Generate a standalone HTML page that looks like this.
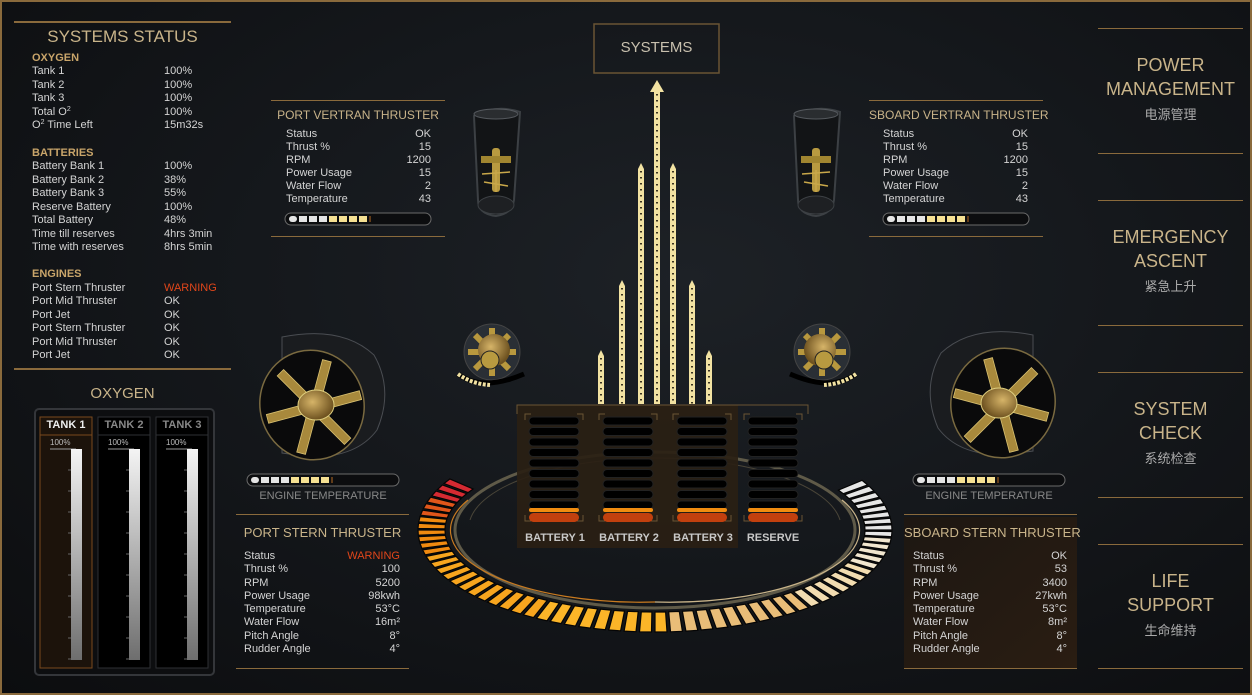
<!DOCTYPE html>
<html><head><meta charset="utf-8"><style>
*{margin:0;padding:0;box-sizing:border-box}
html,body{width:1252px;height:695px;overflow:hidden;background:#0b0c0e}
body{font-family:"Liberation Sans","Noto Sans CJK SC",sans-serif;position:relative}
#bg{position:absolute;left:0;top:0;width:1252px;height:695px;background:radial-gradient(ellipse at 55% 40%,#1d2126 0%,#15181c 45%,#0c0d0f 100%);border:2px solid #8a6a3c}
.t{position:absolute;white-space:nowrap}
.g{color:#c9b48a}
.line{position:absolute;height:2px;background:#8a6a3c}
.r{position:absolute;left:32px;width:200px;font-size:11px;line-height:13px;color:#d4d4d4;white-space:nowrap}
.r span{position:absolute;left:132px}
.r sup{font-size:7px;line-height:0;vertical-align:4px}
.hd{color:#c9a56a;font-weight:bold}
.row{position:absolute;font-size:11px;color:#d4d4d4;line-height:13px}
.menu{position:absolute;left:1098px;width:145px;text-align:center;color:#c9b48a;font-size:18px;line-height:24px}
.cjk{font-size:13px;color:#aaa;line-height:20px;margin-top:4px}
</style></head><body>
<div id="bg"></div>
<svg id="s" width="1252" height="695" style="position:absolute;left:0;top:0">
<defs>
<linearGradient id="tb" x1="0" y1="0" x2="0" y2="1"><stop offset="0" stop-color="#f4f4f4"/><stop offset="1" stop-color="#6e6e6e"/></linearGradient>
<radialGradient id="hub" cx=".4" cy=".4" r=".6"><stop offset="0" stop-color="#d6b468"/><stop offset="1" stop-color="#6e5220"/></radialGradient>
<linearGradient id="sst" x1="0" y1="0" x2="1" y2="1"><stop offset="0" stop-color="#1d1712"/><stop offset="1" stop-color="#2a1d12"/></linearGradient>
</defs>
<rect x="904" y="517" width="173" height="151" fill="url(#sst)"/>
<rect x="35" y="409" width="179" height="266" rx="4" fill="#0d0e10" stroke="#34363a" stroke-width="2"/>
<rect x="40" y="417" width="52" height="251" fill="#1c130b" stroke="#7a4a1e"/>
<line x1="40" y1="435" x2="92" y2="435" stroke="#7a4a1e"/>
<rect x="98" y="417" width="52" height="251" fill="#000" stroke="#2e3034"/>
<line x1="98" y1="435" x2="150" y2="435" stroke="#2e3034"/>
<rect x="156" y="417" width="52" height="251" fill="#000" stroke="#2e3034"/>
<line x1="156" y1="435" x2="208" y2="435" stroke="#2e3034"/>
<g id="tanks"></g>
<rect x="594" y="24" width="125" height="49" fill="none" stroke="#6a5434" stroke-width="1.5"/>
<g id="spires"></g>
<g id="ring"></g>
<ellipse cx="655" cy="530" rx="200" ry="78" fill="none" stroke="#5f5a48" stroke-width="3"/>
<path d="M 468 500 A 190 72 0 0 0 655 602" fill="none" stroke="#c87a20" stroke-width="1.2"/>
<path d="M 655 602 A 190 72 0 0 0 842 500" fill="none" stroke="#c9b48a" stroke-width="1.2"/>
<path d="M 470 520 A 186 70 0 0 1 655 458 A 186 70 0 0 1 840 520" fill="none" stroke="#4a4538" stroke-width="1"/>
<rect x="517" y="405" width="221" height="143" fill="#2a1f14" opacity=".92"/>
<path d="M517 414 V405 H808 V414" fill="none" stroke="#6a5434"/>
<g id="bat"></g>
<g id="prog"></g>
<g id="tubes"></g>
<g id="fans"></g>
</svg>

<div class="line" style="left:14px;top:21px;width:217px"></div>
<div class="line" style="left:14px;top:368px;width:217px"></div>
<div class="t g" style="left:14px;width:217px;text-align:center;top:27px;font-size:17px">SYSTEMS STATUS</div>

<div class="r hd" style="top:52px">OXYGEN</div>
<div class="r" style="top:65px">Tank 1<span>100%</span></div>
<div class="r" style="top:79px">Tank 2<span>100%</span></div>
<div class="r" style="top:92px">Tank 3<span>100%</span></div>
<div class="r" style="top:106px">Total O<sup>2</sup><span>100%</span></div>
<div class="r" style="top:119px">O<sup>2</sup> Time Left<span>15m32s</span></div>
<div class="r hd" style="top:147px">BATTERIES</div>
<div class="r" style="top:160px">Battery Bank 1<span>100%</span></div>
<div class="r" style="top:174px">Battery Bank 2<span>38%</span></div>
<div class="r" style="top:187px">Battery Bank 3<span>55%</span></div>
<div class="r" style="top:201px">Reserve Battery<span>100%</span></div>
<div class="r" style="top:214px">Total Battery<span>48%</span></div>
<div class="r" style="top:228px">Time till reserves<span>4hrs 3min</span></div>
<div class="r" style="top:241px">Time with reserves<span>8hrs 5min</span></div>
<div class="r hd" style="top:268px">ENGINES</div>
<div class="r" style="top:282px">Port Stern Thruster<span style="color:#e0461a">WARNING</span></div>
<div class="r" style="top:295px">Port Mid Thruster<span>OK</span></div>
<div class="r" style="top:309px">Port Jet<span>OK</span></div>
<div class="r" style="top:322px">Port Stern Thruster<span>OK</span></div>
<div class="r" style="top:336px">Port Mid Thruster<span>OK</span></div>
<div class="r" style="top:349px">Port Jet<span>OK</span></div>

<div class="t g" style="left:14px;width:217px;text-align:center;top:385px;font-size:15px">OXYGEN</div>
<div class="t" style="left:40px;width:52px;text-align:center;top:419px;font-size:11px;color:#eee;font-weight:bold">TANK 1</div>
<div class="t" style="left:98px;width:52px;text-align:center;top:419px;font-size:11px;color:#888;font-weight:bold">TANK 2</div>
<div class="t" style="left:156px;width:52px;text-align:center;top:419px;font-size:11px;color:#888;font-weight:bold">TANK 3</div>
<div class="t" style="left:50px;top:438px;font-size:8px;color:#bbb">100%</div>
<div class="t" style="left:108px;top:438px;font-size:8px;color:#bbb">100%</div>
<div class="t" style="left:166px;top:438px;font-size:8px;color:#bbb">100%</div>

<div class="t" style="left:594px;width:125px;text-align:center;top:39px;font-size:15px;color:#c8c0ae">SYSTEMS</div>

<div class="line" style="left:271px;top:100px;width:174px;height:1px"></div>
<div class="line" style="left:271px;top:236px;width:174px;height:1px"></div>
<div class="t g" style="left:271px;width:174px;text-align:center;top:108px;font-size:12px">PORT VERTRAN THRUSTER</div>
<div class="row" style="left:286px;top:128px;width:145px">Status<br>Thrust %<br>RPM<br>Power Usage<br>Water Flow<br>Temperature</div>
<div class="row" style="left:286px;top:128px;width:145px;text-align:right">OK<br>15<br>1200<br>15<br>2<br>43</div>
<div class="line" style="left:869px;top:100px;width:174px;height:1px"></div>
<div class="line" style="left:869px;top:236px;width:174px;height:1px"></div>
<div class="t g" style="left:869px;width:174px;text-align:center;top:108px;font-size:12px">SBOARD VERTRAN THRUSTER</div>
<div class="row" style="left:883px;top:128px;width:145px">Status<br>Thrust %<br>RPM<br>Power Usage<br>Water Flow<br>Temperature</div>
<div class="row" style="left:883px;top:128px;width:145px;text-align:right">OK<br>15<br>1200<br>15<br>2<br>43</div>

<div class="t" style="left:247px;width:152px;text-align:center;top:490px;font-size:11px;color:#888">ENGINE TEMPERATURE</div>
<div class="t" style="left:913px;width:152px;text-align:center;top:490px;font-size:11px;color:#888">ENGINE TEMPERATURE</div>

<div class="line" style="left:236px;top:514px;width:173px;height:1px"></div>
<div class="line" style="left:236px;top:668px;width:173px;height:1px"></div>
<div class="t g" style="left:236px;width:173px;text-align:center;top:525px;font-size:13px">PORT STERN THRUSTER</div>
<div class="row" style="left:244px;top:550px;width:156px;line-height:13.3px">Status<br>Thrust %<br>RPM<br>Power Usage<br>Temperature<br>Water Flow<br>Pitch Angle<br>Rudder Angle</div>
<div class="row" style="left:244px;top:550px;width:156px;text-align:right;line-height:13.3px"><span style="color:#e0461a">WARNING</span><br>100<br>5200<br>98kwh<br>53°C<br>16m²<br>8°<br>4°</div>
<div class="line" style="left:904px;top:514px;width:173px;height:1px"></div>
<div class="line" style="left:904px;top:668px;width:173px;height:1px"></div>
<div class="t g" style="left:904px;width:173px;text-align:center;top:525px;font-size:13px">SBOARD STERN THRUSTER</div>
<div class="row" style="left:913px;top:550px;width:154px;line-height:13.3px">Status<br>Thrust %<br>RPM<br>Power Usage<br>Temperature<br>Water Flow<br>Pitch Angle<br>Rudder Angle</div>
<div class="row" style="left:913px;top:550px;width:154px;text-align:right;line-height:13.3px">OK<br>53<br>3400<br>27kwh<br>53°C<br>8m²<br>8°<br>4°</div>

<div class="t" style="left:517px;top:532px;font-size:11px;color:#c8c8c8;font-weight:bold;width:76px;text-align:center">BATTERY 1</div>
<div class="t" style="left:591px;top:532px;font-size:11px;color:#c8c8c8;font-weight:bold;width:76px;text-align:center">BATTERY 2</div>
<div class="t" style="left:665px;top:532px;font-size:11px;color:#c8c8c8;font-weight:bold;width:76px;text-align:center">BATTERY 3</div>
<div class="t" style="left:735px;top:532px;font-size:11px;color:#c8c8c8;font-weight:bold;width:76px;text-align:center">RESERVE</div>

<div class="line" style="left:1098px;top:28px;width:145px;height:1px"></div>
<div class="line" style="left:1098px;top:153px;width:145px;height:1px"></div>
<div class="line" style="left:1098px;top:200px;width:145px;height:1px"></div>
<div class="line" style="left:1098px;top:325px;width:145px;height:1px"></div>
<div class="line" style="left:1098px;top:372px;width:145px;height:1px"></div>
<div class="line" style="left:1098px;top:497px;width:145px;height:1px"></div>
<div class="line" style="left:1098px;top:544px;width:145px;height:1px"></div>
<div class="line" style="left:1098px;top:668px;width:145px;height:1px"></div>
<div class="menu" style="top:53px">POWER<br>MANAGEMENT<div class="cjk">电源管理</div></div>
<div class="menu" style="top:225px">EMERGENCY<br>ASCENT<div class="cjk">紧急上升</div></div>
<div class="menu" style="top:397px">SYSTEM<br>CHECK<div class="cjk">系统检查</div></div>
<div class="menu" style="top:569px">LIFE<br>SUPPORT<div class="cjk">生命维持</div></div>

<script>
var NS="http://www.w3.org/2000/svg";
function el(p,t,a){var e=document.createElementNS(NS,t);for(var k in a)e.setAttribute(k,a[k]);document.getElementById(p).appendChild(e);return e;}
[40,98,156].forEach(function(x){
 el("tanks","line",{x1:x+10,y1:449,x2:x+36,y2:449,stroke:"#999","stroke-width":1});
 el("tanks","rect",{x:x+31,y:449,width:11,height:211,fill:"url(#tb)"});
 for(var i=0;i<10;i++){el("tanks","line",{x1:x+28,y1:470+i*21,x2:x+31,y2:470+i*21,stroke:"#666"});}
});
var sp=[[601,350],[622,280],[641,163],[657,86],[673,163],[692,280],[709,350]];
sp.forEach(function(s){
 var x=s[0],t=s[1];
 el("spires","path",{d:"M"+(x-3)+" "+(t+6)+" L"+x+" "+t+" L"+(x+3)+" "+(t+6)+" V404 H"+(x-3)+" Z",fill:"#f2e2a2"});
 el("spires","line",{x1:x,y1:t+8,x2:x,y2:404,stroke:"#3a3320","stroke-width":2,"stroke-dasharray":"1.5 4.5"});
});
el("spires","path",{d:"M650 92 L657 80 L664 92 Z",fill:"#f2e2a2"});
var cx=655,cy=530;
function pt(t,rx,ry){var r=t*Math.PI/180;return (cx+rx*Math.cos(r)).toFixed(1)+" "+(cy+ry*Math.sin(r)).toFixed(1);}
for(var i=0;i<64;i++){
 var t0=210-i*3.75,t1=t0-2.9;
 var d="M"+pt(t0,237,102)+" L"+pt(t1,237,102)+" L"+pt(t1,210,82)+" L"+pt(t0,210,82)+" Z";
 var tm=t0, c;
 if(tm>200)c="#d42a32";else if(tm>188)c="#e0561a";else if(tm>165)c="#f08a10";else if(tm>120)c="#f7a51e";else if(tm>=90)c="#fbb528";
 else if(tm>50)c="#e9bd78";else if(tm>25)c="#f2dcb0";else if(tm>5)c="#f1e6cf";else c="#e6e6e6";
 el("ring","path",{d:d,fill:c,stroke:"#050505","stroke-width":1.2});
}
[529,603,677,748].forEach(function(x,j){
 el("bat","path",{d:"M"+(x-4)+" 420 V414 H"+(x+2)+" M"+(x+48)+" 414 H"+(x+54)+" V420 M"+(x-4)+" 515 V521 H"+(x+2)+" M"+(x+48)+" 521 H"+(x+54)+" V515",fill:"none",stroke:"#6a5434"});
 for(var i=0;i<9;i++)el("bat","rect",{x:x,y:417+i*10.5,width:50,height:8,rx:4,fill:"#000",stroke:"#222"});
 el("bat","rect",{x:x,y:508,width:50,height:4,rx:2,fill:"#f08c10"});
 el("bat","rect",{x:x,y:513,width:50,height:9,rx:4.5,fill:"#c2400e"});
});
function prog(x,y,w){
 el("prog","rect",{x:x,y:y,width:w,height:12,rx:6,fill:"#0c0d0f",stroke:"#6a6a6a"});
 for(var i=0;i<8;i++)el("prog","rect",{x:x+4+i*10,y:y+3,width:8,height:6,rx:i==0?3:0,fill:i<4?"#e4e4e4":"#f5e092"});
 el("prog","line",{x1:x+85,y1:y+3,x2:x+85,y2:y+9,stroke:"#b86a20"});
}
prog(285,213,146);prog(883,213,146);prog(247,474,152);prog(913,474,152);
function tube(x){
 var g=document.createElementNS(NS,"g");g.setAttribute("transform","translate("+x+",0)");document.getElementById("tubes").appendChild(g);
 g.innerHTML='<path d="M2 116 Q24 104 48 112 L42 200 Q40 214 24 216 Q6 214 6 200 Z" fill="#121416" stroke="#3c4044" stroke-width="2"/>'+
 '<ellipse cx="24" cy="114" rx="22" ry="5" fill="#2a2d30" stroke="#55595e"/>'+
 '<ellipse cx="24" cy="205" rx="18" ry="9" fill="#1e2023" stroke="#3c4044"/>'+
 '<rect x="20" y="148" width="8" height="44" rx="3" fill="#b89a40"/>'+
 '<rect x="9" y="156" width="30" height="7" fill="#a08530"/>'+
 '<path d="M10 174 L38 172 M12 182 L36 186 M24 170 L24 192" stroke="#c9a84a" stroke-width="1.5"/>';
}
tube(472);tube(792);
function fan(cx,cy,flip){
 var g=document.createElementNS(NS,"g");g.setAttribute("transform","translate("+cx+","+cy+") scale("+(flip?-1:1)+",1)");document.getElementById("fans").appendChild(g);
 var s='<path d="M-40 -58 Q20 -70 52 -40 Q72 -5 55 35 Q35 62 -10 62 L-40 58 Z" fill="#1a1c1f" stroke="#4a4d52"/>'+
 '<ellipse cx="-10" cy="10" rx="52" ry="55" fill="#0a0a0b" stroke="#7a6a40" stroke-width="1.5" transform="rotate(-15 -10 10)"/>';
 for(var i=0;i<6;i++){s+='<rect x="-4" y="-48" width="9" height="48" fill="#a8893c" stroke="#d8c070" stroke-width=".8" transform="translate(-8,12) rotate('+(i*60+15)+')"/>';}
 s+='<ellipse cx="-6" cy="10" rx="18" ry="15" fill="url(#hub)" stroke="#e0d080"/>';
 g.innerHTML=s;
}
fan(322,395,false);fan(993,393,true);
function pod(cx,cy,flip){
 var g=document.createElementNS(NS,"g");g.setAttribute("transform","translate("+cx+","+cy+") scale("+(flip?-1:1)+",1)");document.getElementById("fans").appendChild(g);
 var s='<circle cx="0" cy="0" r="28" fill="#2a2f35" stroke="#444"/>';
 for(var i=0;i<8;i++)s+='<rect x="-3" y="-24" width="6" height="12" fill="#b8983e" transform="rotate('+(i*45)+')"/>';
 s+='<circle cx="2" cy="-2" r="16" fill="url(#hub)"/><circle cx="-2" cy="8" r="9" fill="#b89a40" stroke="#222"/>';
 s+='<path d="M-34 22 Q-10 40 32 22" fill="none" stroke="#000" stroke-width="5"/>';
 s+='<path d="M-34 22 Q-20 32 -2 33" fill="none" stroke="#f2e2a2" stroke-width="4" stroke-dasharray="3 1.5"/>';
 g.innerHTML=s;
}
pod(492,352,false);pod(822,352,true);
</script>
</body></html>
